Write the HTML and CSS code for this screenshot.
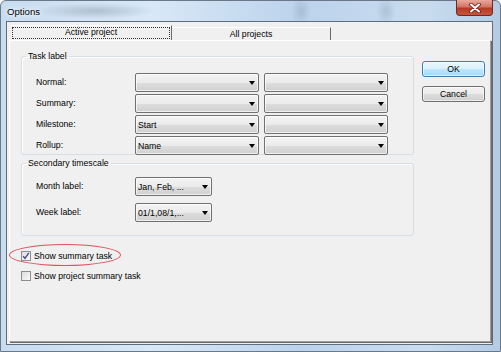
FILE: index.html
```html
<!DOCTYPE html>
<html lang="en">
<head>
    <meta charset="UTF-8">
    <title>Options</title>
    <link rel="stylesheet" href="styles.css">
</head>
<body>

    <div class="window">
        <div class="titlebar">
            <span class="title">Options</span>
            <div class="close">
                <svg width="14" height="10" viewBox="0 0 14 10">
                    <path d="M3 1.5 L11 8.5 M11 1.5 L3 8.5" stroke="#5a1e16" stroke-width="3.6" stroke-linecap="round"/>
                    <path d="M3 1.5 L11 8.5 M11 1.5 L3 8.5" stroke="#ffffff" stroke-width="2" stroke-linecap="round"/>
                </svg>
            </div>
        </div>

        <div class="client">
            <div class="tabs">
                <div class="tab active"><span class="focus">Active project</span></div>
                <div class="tab">All projects</div>
            </div>

            <div class="page">
                <div class="main">
                    <!-- Task label group -->
                    <fieldset class="group task-group">
                        <legend>Task label</legend>
                        <div class="rows">
                            <div class="label">Normal:</div>
                            <div class="combo"><span></span><svg width="6" height="4"><path d="M0 0 H6 L3 4 Z" fill="#000"/></svg></div>
                            <div class="combo"><span></span><svg width="6" height="4"><path d="M0 0 H6 L3 4 Z" fill="#000"/></svg></div>

                            <div class="label">Summary:</div>
                            <div class="combo"><span></span><svg width="6" height="4"><path d="M0 0 H6 L3 4 Z" fill="#000"/></svg></div>
                            <div class="combo"><span></span><svg width="6" height="4"><path d="M0 0 H6 L3 4 Z" fill="#000"/></svg></div>

                            <div class="label">Milestone:</div>
                            <div class="combo"><span>Start</span><svg width="6" height="4"><path d="M0 0 H6 L3 4 Z" fill="#000"/></svg></div>
                            <div class="combo"><span></span><svg width="6" height="4"><path d="M0 0 H6 L3 4 Z" fill="#000"/></svg></div>

                            <div class="label">Rollup:</div>
                            <div class="combo"><span>Name</span><svg width="6" height="4"><path d="M0 0 H6 L3 4 Z" fill="#000"/></svg></div>
                            <div class="combo"><span></span><svg width="6" height="4"><path d="M0 0 H6 L3 4 Z" fill="#000"/></svg></div>
                        </div>
                    </fieldset>

                    <!-- Secondary timescale group -->
                    <fieldset class="group scale-group">
                        <legend>Secondary timescale</legend>
                        <div class="rows small">
                            <div class="label">Month label:</div>
                            <div class="combo"><span>Jan, Feb, ...</span><svg width="6" height="4"><path d="M0 0 H6 L3 4 Z" fill="#000"/></svg></div>

                            <div class="label">Week label:</div>
                            <div class="combo"><span>01/1,08/1,...</span><svg width="6" height="4"><path d="M0 0 H6 L3 4 Z" fill="#000"/></svg></div>
                        </div>
                    </fieldset>

                    <div class="check first">
                        <span class="box">
                            <svg width="8" height="8" viewBox="0 0 8 8"><path d="M1.2 4.2 L3 6.4 L6.8 0.8" stroke="#3d4f94" stroke-width="1.4" fill="none"/></svg>
                        </span>
                        Show summary task
                    </div>
                    <div class="check">
                        <span class="box"></span>
                        Show project summary task
                    </div>
                </div>

                <div class="buttons">
                    <div class="btn default">OK</div>
                    <div class="btn">Cancel</div>
                </div>
            </div>
        </div>

        <!-- Red annotation ring -->
        <div class="ring"></div>
    </div>

</body>
</html>
```

FILE: styles.css
```css
/* Basic Reset */
* {
    margin: 0;
    padding: 0;
    box-sizing: border-box;
}

body {
    font-family: 'Liberation Sans', Arial, sans-serif;
    font-size: 8.7px;
    color: #000;
    background: #fff;
}

/* Window frame */
.window {
    position: relative;
    width: 501px;
    height: 352px;
    display: flex;
    flex-direction: column;
    padding: 0 7px 6px 5px;
    border: 1px solid #6a7888;
    border-radius: 6px 6px 0 0;
    background:
        radial-gradient(ellipse 60px 8px at 95px 10px, rgba(110, 125, 140, 0.35), transparent),
        radial-gradient(ellipse 10px 14px at 300px 10px, rgba(120, 140, 160, 0.3), transparent),
        radial-gradient(ellipse 10px 14px at 385px 10px, rgba(120, 140, 160, 0.3), transparent),
        linear-gradient(to right, #c8dcf0, #d8e8f7 30%, #bcd3ec 60%, #c9dcef 85%, #b4cbe4);
}

.titlebar {
    height: 20px;
    display: flex;
    align-items: flex-start;
}

.title {
    font-size: 9.6px;
    margin: 5px 0 0 1px;
    text-shadow: 0 0 6px #fff, 0 0 3px #fff;
}

.close {
    margin-left: auto;
    margin-top: -1px;
    width: 37px;
    height: 16px;
    display: flex;
    align-items: center;
    justify-content: center;
    border: 1px solid #6e2a22;
    border-top: none;
    border-radius: 0 0 4px 4px;
    background: linear-gradient(#e9a99b, #d27565 45%, #b63a25 55%, #c9553c);
}

/* Client area */
.client {
    flex: 1;
    display: flex;
    flex-direction: column;
    background: #f0f0f0;
    border: 1px solid #5f6e7d;
    padding: 3px 1px 2px 2px;
}

.tabs {
    display: flex;
    height: 15px;
    margin-left: 2px;
}

.tab {
    width: 159px;
    display: flex;
    align-items: center;
    justify-content: center;
    margin-top: 2px;
    border-right: 1px solid #696969;
    border-top: 1px solid #fff;
}

.tab.active {
    width: 161px;
    margin-top: 0;
    border-right: 1px solid #696969;
    padding: 1px;
}

.focus {
    width: 100%;
    height: 100%;
    display: flex;
    justify-content: center;
    align-items: center;
    border: 1px dotted #333;
    padding-bottom: 2px;
}

/* Tab page */
.page {
    flex: 1;
    display: flex;
    gap: 8px;
    padding: 10px 5px 0 11px;
    border-top: 1px solid #fff;
    border-left: 1px solid #fff;
    border-right: 1px solid #a0a0a0;
    border-bottom: 1px solid #a0a0a0;
    box-shadow: 1px 1px 0 #696969;
}

.main {
    width: 396px;
}

.group {
    border: 1px solid #d5dfe5;
    border-radius: 3px;
    box-shadow: inset 1px 1px 0 #fff;
}

.group legend {
    margin-left: 4px;
    padding: 0 2px;
    line-height: 11px;
}

.rows {
    display: grid;
    grid-template-columns: 94px 124px 124px;
    grid-auto-rows: 19px;
    column-gap: 5px;
    row-gap: 2px;
    align-items: center;
    padding-left: 14px;
}

.task-group .rows {
    padding-top: 11px;
    margin-bottom: -1px;
}

.scale-group {
    margin-top: 3px;
}

.rows.small {
    grid-template-columns: 94px 77px;
    row-gap: 7px;
    padding-top: 8px;
    padding-bottom: 13px;
}

.label {
    padding-bottom: 2px;
}

.combo {
    height: 19px;
    display: flex;
    align-items: center;
    justify-content: space-between;
    padding: 0 3px 0 2px;
    border: 1px solid #707070;
    border-radius: 2px;
    background: linear-gradient(#f3f3f3, #ebebeb 50%, #dddddd 51%, #d0d0d0);
    box-shadow: inset 0 0 0 1px rgba(255, 255, 255, 0.7);
}

/* Checkboxes */
.check {
    height: 13px;
    display: flex;
    align-items: center;
    gap: 3px;
    margin-top: 7px;
}

.check.first {
    margin-top: 13px;
}

.box {
    width: 10px;
    height: 10px;
    display: flex;
    align-items: center;
    justify-content: center;
    border: 1px solid #8f8f8f;
    background: linear-gradient(135deg, #dcdcdc, #fbfbfb);
}

/* Buttons */
.buttons {
    display: flex;
    flex-direction: column;
    gap: 9px;
    margin-top: 10px;
}

.btn {
    width: 63px;
    height: 16px;
    display: flex;
    align-items: center;
    justify-content: center;
    border: 1px solid #707070;
    border-radius: 3px;
    background: linear-gradient(#f2f2f2, #ebebeb 50%, #dddddd 51%, #cfcfcf);
    box-shadow: inset 0 0 0 1px rgba(255, 255, 255, 0.6);
}

.btn.default {
    border-color: #3c7fb1;
    background: linear-gradient(#eaf6fd, #d9f0fc 50%, #bee6fd 51%, #a7d9f5);
}

/* Annotation */
.ring {
    position: absolute;
    left: 8px;
    top: 243px;
    width: 112px;
    height: 22px;
    border: 1px solid #e2505e;
    border-radius: 50%;
}
```
